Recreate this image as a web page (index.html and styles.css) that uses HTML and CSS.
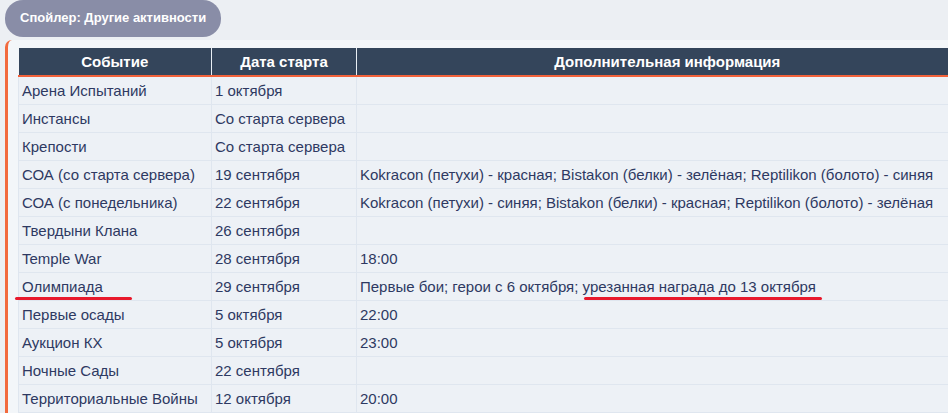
FILE: index.html
```html
<!DOCTYPE html>
<html lang="ru">
<head>
<meta charset="utf-8">
<link rel="stylesheet" href="styles.css">
</head>
<body>
<div class="spoiler-btn">Спойлер: Другие активности</div>
<div class="spoiler-body">
<table class="events">
<colgroup><col class="c1"><col class="c2"><col class="c3"></colgroup>
<thead>
<tr><th>Событие</th><th>Дата старта</th><th>Дополнительная информация</th></tr>
</thead>
<tbody>
<tr><td>Арена Испытаний</td><td>1 октября</td><td></td></tr>
<tr><td>Инстансы</td><td>Со старта сервера</td><td></td></tr>
<tr><td>Крепости</td><td>Со старта сервера</td><td></td></tr>
<tr><td>СОА (со старта сервера)</td><td>19 сентября</td><td>Kokracon (петухи) - красная; Bistakon (белки) - зелёная; Reptilikon (болото) - синяя</td></tr>
<tr><td>СОА (с понедельника)</td><td>22 сентября</td><td>Kokracon (петухи) - синяя; Bistakon (белки) - красная; Reptilikon (болото) - зелёная</td></tr>
<tr><td>Твердыни Клана</td><td>26 сентября</td><td></td></tr>
<tr><td>Temple War</td><td>28 сентября</td><td>18:00</td></tr>
<tr><td><span class="mark mark-a">Олимпиада</span></td><td>29 сентября</td><td>Первые бои; герои с 6 октября; <span class="mark mark-b">урезанная награда до 13 октября</span></td></tr>
<tr><td>Первые осады</td><td>5 октября</td><td>22:00</td></tr>
<tr><td>Аукцион КХ</td><td>5 октября</td><td>23:00</td></tr>
<tr><td>Ночные Сады</td><td>22 сентября</td><td></td></tr>
<tr><td>Территориальные Войны</td><td>12 октября</td><td>20:00</td></tr>
</tbody>
</table>
</div>
</body>
</html>
```
FILE: styles.css
```css
html, body {
  margin: 0;
  padding: 0;
}
body {
  background: #eceff3;
  font-family: "Liberation Sans", Arial, sans-serif;
  width: 948px;
  height: 413px;
  overflow: hidden;
}
.spoiler-btn {
  display: inline-block;
  margin-left: 5px;
  height: 37px;
  line-height: 35px;
  padding: 0 15px;
  box-sizing: border-box;
  white-space: nowrap;
  background: #898da7;
  color: #fff;
  font-weight: bold;
  font-size: 13px;
  border-radius: 18px;
}
.spoiler-body {
  margin-top: 3px;
  margin-left: 5px;
  border-left: 3px solid #f26a3d;
  border-top-left-radius: 7px;
  background: #f3f6f9;
  padding: 8px 0 0 10px;
  width: 960px;
}
.events {
  border-collapse: collapse;
  width: 960px;
  table-layout: fixed;
  font-size: 15px;
  color: #2e3962;
}
.c1 { width: 193px; }
.c2 { width: 145px; }
.events th {
  background: #34455b;
  color: #fff;
  font-weight: bold;
  height: 27px;
  padding: 0 3px;
  border-left: 1px solid #e9eef4;
  border-bottom: 2px solid #f2613a;
  text-align: center;
  white-space: nowrap;
}
.events th:first-child { border-left: none; }
.events td {
  background: #edf1f6;
  border: 1px solid #dfe6ef;
  height: 28px;
  padding: 0 3px;
  white-space: nowrap;
  box-sizing: border-box;
}
.events tbody tr:first-child td { border-top: none; }
.mark {
  position: relative;
}
.mark::after {
  content: "";
  position: absolute;
  height: 3px;
  border-radius: 2px;
  background: #e8192c;
  bottom: -5px;
}
.mark-a::after {
  left: -7px;
  width: 117px;
}
.mark-b::after {
  left: 1px;
  right: -6px;
}
```
